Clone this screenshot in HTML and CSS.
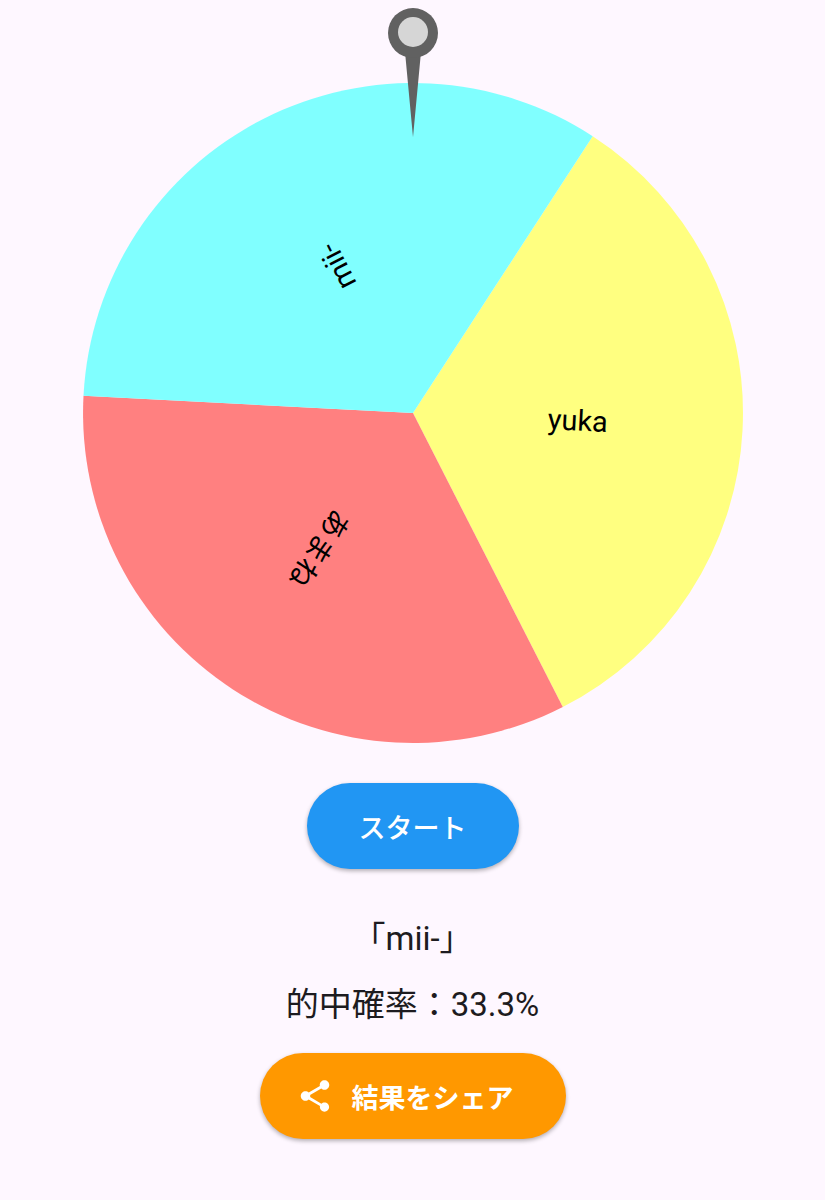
FILE: index.html
```html
<!DOCTYPE html>
<html lang="ja">
<head>
  <meta charset="UTF-8" />
  <meta name="viewport" content="width=device-width, initial-scale=1.0"/>
  <title>ルーレット</title>
  <link rel="stylesheet" href="styles.css">
</head>
<body>
  <main class="roulette">
    <svg class="wheel" viewBox="0 0 660 735" role="img" aria-label="ルーレット">
      <!-- 円盤 -->
      <g transform="translate(330 405)">
        <path class="slice-yellow" d="M0 0 L179.7 -276.8 A330 330 0 0 1 149.8 294 Z"/>
        <path class="slice-red" d="M0 0 L149.8 294 A330 330 0 0 1 -329.5 -17.3 Z"/>
        <path class="slice-cyan" d="M0 0 L-329.5 -17.3 A330 330 0 0 1 179.7 -276.8 Z"/>
        <text class="slice-label" transform="rotate(3)" x="165" y="9">yuka</text>
        <text class="slice-label" transform="rotate(123)" x="165" y="15">あまね</text>
        <text class="slice-label" transform="rotate(243)" x="165" y="9">mii-</text>
      </g>
      <!-- 針 -->
      <path class="pin" d="M322 44 H338 L330 129 Z"/>
      <circle class="pin" cx="330" cy="25" r="25"/>
      <circle class="pin-center" cx="330" cy="24" r="15"/>
    </svg>

    <button class="btn btn-start" type="button">スタート</button>

    <div class="result">
      <p>「mii-」</p>
      <p>的中確率：33.3%</p>
    </div>

    <button class="btn btn-share" type="button">
      <svg class="icon" viewBox="0 0 24 24" aria-hidden="true">
        <path d="M18 16.08c-.76 0-1.44.3-1.96.77L8.91 12.7c.05-.23.09-.46.09-.7s-.04-.47-.09-.7l7.05-4.11c.54.5 1.25.81 2.04.81 1.66 0 3-1.34 3-3s-1.34-3-3-3-3 1.34-3 3c0 .24.04.47.09.7L8.04 9.81C7.5 9.31 6.79 9 6 9c-1.66 0-3 1.34-3 3s1.34 3 3 3c.79 0 1.5-.31 2.04-.81l7.12 4.16c-.05.21-.08.43-.08.65 0 1.61 1.31 2.92 2.92 2.92s2.92-1.31 2.92-2.92-1.31-2.92-2.92-2.92z"/>
      </svg>
      <span>結果をシェア</span>
    </button>
  </main>
</body>
</html>
```
FILE: styles.css
```css
body {
  margin: 0;
  background-color: #fef7ff;
  color: #1d1b20;
  font-family: Roboto, 'Noto Sans CJK JP', sans-serif;
}

.roulette {
  display: flex;
  flex-direction: column;
  align-items: center;
  padding: 8px 0 60px;
}

.wheel {
  display: block;
  width: 80%;
}

.slice-yellow {
  fill: #ffff80;
}
.slice-red {
  fill: #ff8080;
}
.slice-cyan {
  fill: #80ffff;
}

.slice-label {
  font-size: 29px;
  text-anchor: middle;
  fill: #000;
}

.pin {
  fill: #616161;
}
.pin-center {
  fill: #d6d6d6;
}

.btn {
  display: flex;
  align-items: center;
  gap: 18px;
  min-height: 86px;
  padding: 0 52px;
  border: none;
  border-radius: 43px;
  box-sizing: border-box;
  box-shadow: 0 2px 4px rgba(0, 0, 0, 0.3);
  color: #fff;
  font-family: inherit;
  font-size: 27px;
  cursor: pointer;
}

.btn-start {
  margin-top: 40px;
  background-color: #2196f3;
  font-weight: 500;
}

.btn-share {
  padding-left: 36px;
  background-color: #ff9800;
  font-weight: bold;
}

.icon {
  width: 38px;
  height: 38px;
  fill: currentColor;
}

.result {
  margin: 37px 0 15px;
  font-size: 33px;
  line-height: 66px;
  text-align: center;
}
.result p {
  margin: 0;
}
```
